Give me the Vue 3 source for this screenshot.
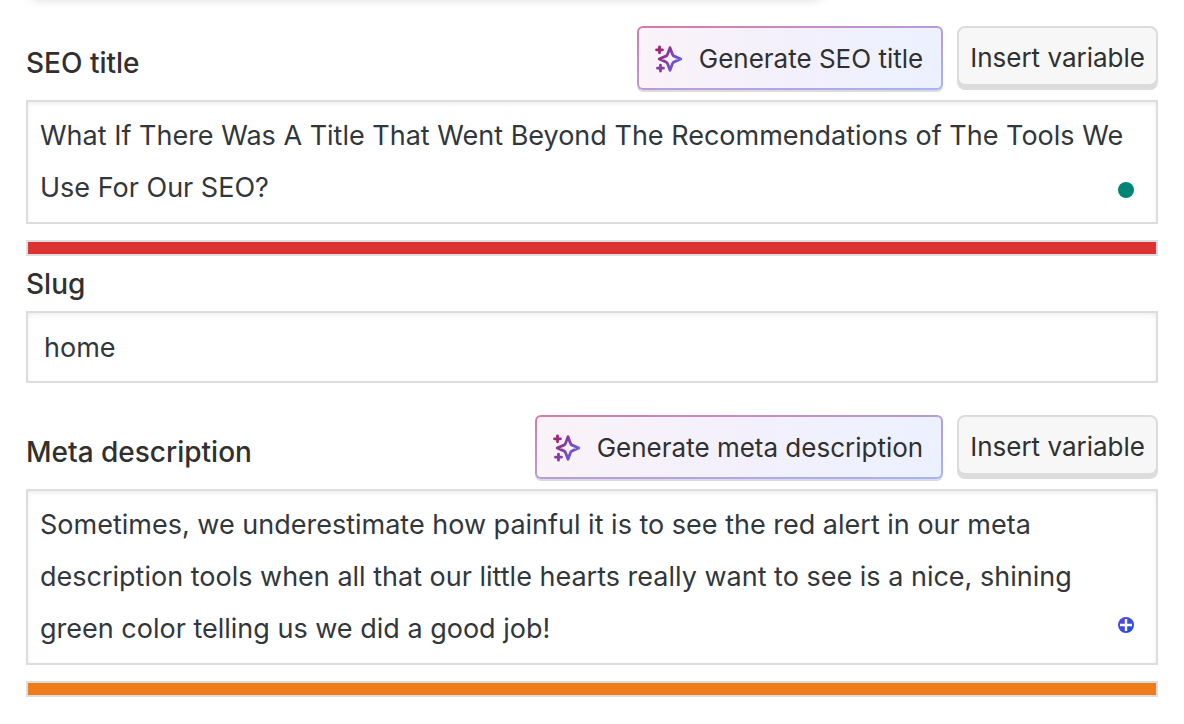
<script setup>
import { ref } from 'vue'

const title = ref('What If There Was A Title That Went Beyond The Recommendations of The Tools We Use For Our SEO?')
const slug = ref('home')
const description = ref('Sometimes, we underestimate how painful it is to see the red alert in our meta description tools when all that our little hearts really want to see is a nice, shining green color telling us we did a good job!')
</script>

<template>
  <div class="preview-edge"></div>
  <main class="editor">
    <svg class="defs" width="0" height="0" aria-hidden="true">
      <defs>
        <linearGradient id="spark" gradientUnits="userSpaceOnUse" x1="2" y1="4" x2="28" y2="18">
          <stop offset="0" stop-color="#a61e69" />
          <stop offset="0.5" stop-color="#7f42b0" />
          <stop offset="1" stop-color="#6366f1" />
        </linearGradient>
      </defs>
      <symbol id="sparkles" viewBox="0 0 28 28">
        <path d="M15 2.6 17.3 9Q17.9 10.8 19.7 11.4L25.8 14 19.7 16.6Q17.9 17.2 17.3 19L15 25.4 12.7 19Q12.1 17.2 10.3 16.6L4.2 14 10.3 11.4Q12.1 10.8 12.7 9Z" fill="none" stroke="url(#spark)" stroke-width="2.8" stroke-linejoin="round" />
        <path d="M4.5 1.8V7.8M1.5 4.8H7.5M5.5 20.2V26.2M2.5 23.2H8.5" fill="none" stroke="url(#spark)" stroke-width="2.8" stroke-linecap="round" />
      </symbol>
    </svg>

    <section>
      <div class="head">
        <label for="seo-title">SEO title</label>
        <div class="actions">
          <button class="ai" type="button">
            <svg class="icon" aria-hidden="true"><use href="#sparkles" /></svg>
            Generate SEO title
          </button>
          <button class="insert" type="button">Insert variable</button>
        </div>
      </div>
      <div class="box">
        <textarea id="seo-title" v-model="title" rows="2" spellcheck="false"></textarea>
        <span class="dot"></span>
      </div>
      <progress class="red" max="100" value="100" aria-label="SEO title width"></progress>
    </section>

    <section class="slug">
      <label for="slug">Slug</label>
      <input id="slug" v-model="slug" type="text" />
    </section>

    <section>
      <div class="head">
        <label for="meta">Meta description</label>
        <div class="actions">
          <button class="ai" type="button">
            <svg class="icon" aria-hidden="true"><use href="#sparkles" /></svg>
            Generate meta description
          </button>
          <button class="insert" type="button">Insert variable</button>
        </div>
      </div>
      <div class="box">
        <textarea id="meta" v-model="description" rows="3" spellcheck="false"></textarea>
        <svg class="plus" viewBox="0 0 16 16" aria-hidden="true">
          <defs>
            <linearGradient id="plus-fill" x1="0" y1="0" x2="1" y2="1">
              <stop offset="0" stop-color="#5b48ea" />
              <stop offset="1" stop-color="#194fd8" />
            </linearGradient>
          </defs>
          <circle cx="8" cy="8" r="8" fill="url(#plus-fill)" />
          <path d="M8 2V14M2 8H14" stroke="#fff" stroke-width="2.4" />
        </svg>
      </div>
      <progress class="orange" max="100" value="100" aria-label="Meta description length"></progress>
    </section>
  </main>
</template>

<style>
body {
  background: #fff;
}
</style>

<style scoped>
.preview-edge {
  position: absolute;
  top: -20px;
  left: 30px;
  width: 792px;
  height: 16px;
  border-radius: 8px;
  box-shadow: 0 2px 12px rgba(0, 0, 0, 0.2);
}
.editor,
button,
input,
textarea {
  font-family: Inter, "Liberation Sans", sans-serif;
  font-size: 26px;
  color: #303030;
}
.editor {
  padding: 26px;
}
.defs {
  position: absolute;
}
label {
  font-size: 28px;
  font-weight: 500;
  line-height: 34px;
}
.head {
  display: flex;
  justify-content: space-between;
  align-items: flex-end;
  margin-bottom: 10px;
}
.head label {
  margin-bottom: 10px;
}
.actions {
  display: flex;
  align-items: flex-start;
  gap: 14px;
}
button {
  box-sizing: border-box;
  border: 2px solid #dcdcdc;
  border-radius: 8px;
  line-height: 32px;
  white-space: nowrap;
}
.ai {
  display: flex;
  align-items: center;
  gap: 16px;
  height: 64px;
  padding: 2px 18px 0 16px;
  border-color: transparent;
  border-radius: 6px;
  background:
    linear-gradient(to right, #faf3f8, #f3f0fc 50%, #ecf1ff) padding-box,
    linear-gradient(to bottom right, #d57ba8, #b99bd8 50%, #a5b4fc) border-box;
  box-shadow: 0 2px 0 #dcdcdc;
}
.icon {
  width: 28px;
  height: 28px;
}
.insert {
  height: 60px;
  padding: 4px 11px 0;
  background: #f7f7f7;
  box-shadow: 0 4px 0 #dcdcdc;
}
.box {
  position: relative;
}
textarea,
input {
  display: block;
  box-sizing: border-box;
  width: 100%;
  margin: 0;
  border: 2px solid #ddd;
  border-radius: 0;
  background: #fff;
  box-shadow: inset 0 2px 4px rgba(0, 0, 0, 0.07);
  color: #32373c;
  font-size: 27px;
  outline: none;
}
textarea {
  padding: 8px 12px;
  line-height: 52px;
  resize: none;
  overflow: hidden;
}
input {
  height: 72px;
  padding: 0 16px;
}
.dot,
.plus {
  position: absolute;
  right: 24px;
  width: 16px;
  height: 16px;
}
.dot {
  bottom: 26px;
  border-radius: 50%;
  background: #008474;
}
.plus {
  bottom: 32px;
}
progress {
  display: block;
  box-sizing: border-box;
  width: 100%;
  height: 16px;
  margin-top: 16px;
  border: 2px solid #ddd;
  appearance: none;
}
progress::-webkit-progress-bar {
  background: #fff;
}
.red::-webkit-progress-value {
  background: #dc3232;
}
.orange::-webkit-progress-value {
  background: #ee7c1b;
}
.slug {
  padding: 11px 0 32px;
}
.slug label {
  display: block;
  margin-bottom: 10px;
}
</style>
